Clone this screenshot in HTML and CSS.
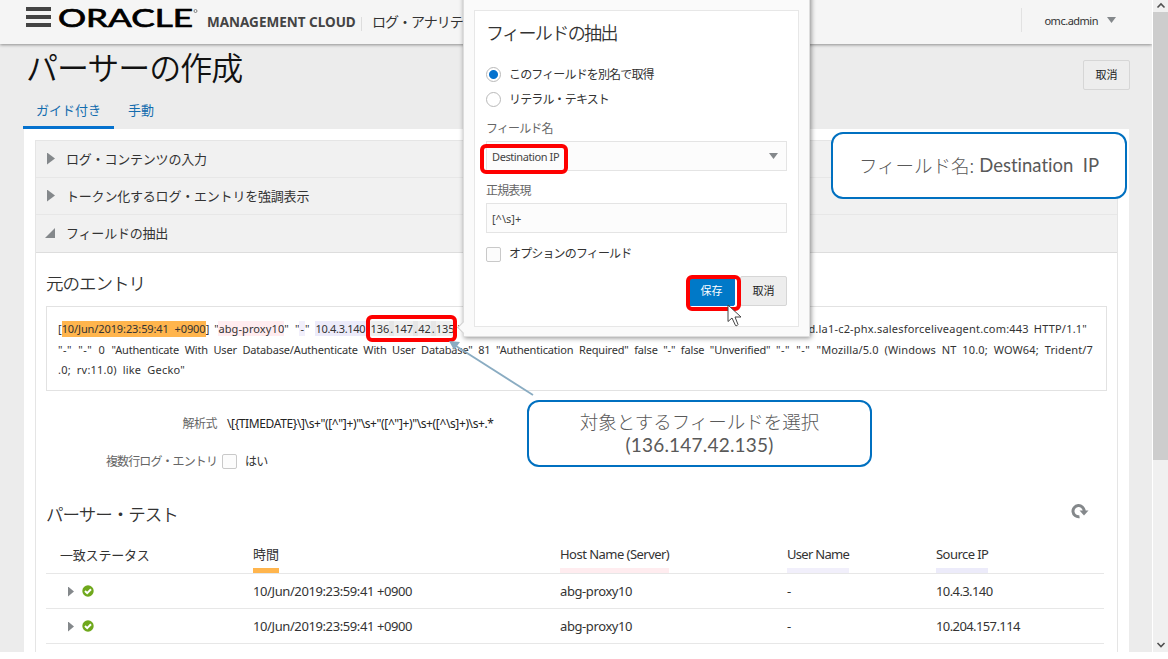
FILE: index.html
```
<!DOCTYPE html>
<html lang="ja">
<head>
    <meta charset="UTF-8">
    <meta name="viewport" content="width=device-width, initial-scale=1.0">
    <title>パーサーの作成</title>
    <link rel="stylesheet" href="styles.css">
</head>
<body>
    <div class="window">
        <div class="page">
            <header class="header">
                <div class="menu"><span></span><span></span><span></span></div>
                <svg class="logo" width="140" height="24" viewBox="0 0 140 24">
                    <text x="-1" y="18.500" textLength="135" lengthAdjust="spacingAndGlyphs">ORACLE</text>
                    <circle cx="136.500" cy="3" r="1.500" fill="none" stroke="#666" stroke-width="0.800"/>
                </svg>
                <span class="product">MANAGEMENT CLOUD</span>
                <span class="service">ログ・アナリティクス</span>
                <div class="user"><span>omc.admin</span><i class="caret"></i></div>
            </header>

            <div class="title-row">
                <h1>パーサーの作成</h1>
                <button class="btn">取消</button>
            </div>
            <nav class="tabs">
                <a class="tab active">ガイド付き</a>
                <a class="tab">手動</a>
            </nav>

            <main class="panel">
                <div class="accordion">
                    <div class="step"><i class="arrow"></i><span>ログ・コンテンツの入力</span></div>
                    <div class="step"><i class="arrow"></i><span>トークン化するログ・エントリを強調表示</span></div>
                    <div class="step open"><i class="arrow-open"></i><span>フィールドの抽出</span></div>

                    <section class="content">
                        <h2>元のエントリ</h2>
                        <div class="log">
                            <div class="log-line first">
                                <span>[</span><span class="hl-time">10/Jun/2019:23:59:41 +0900</span><span>]</span>
                                <span class="host">"<span class="hl-host">abg-proxy10</span>"</span>
                                <span class="dash">"<span class="hl-user">-</span>"</span>
                                <span class="hl-source">10.4.3.140</span>
                                <span class="hl-dest">136<b>.</b>147<b>.</b>42<b>.</b>135</span>
                                <span class="quote">"</span>
                                <span class="tail">d.la1-c2-phx.salesforceliveagent.com:443 HTTP/1.1"</span>
                            </div>
                            <div class="log-line second"><span class="wide">"-" "-" 0 </span>"Authenticate With User Database/Authenticate With User Database" 81 "Authentication Required" false "-" false "Unverified" <span class="wide">"-" "-" </span><span class="agent">"Mozilla/5.0 (Windows NT 10.0; WOW64; Trident/7</span></div>
                            <div class="log-line third">.0; rv:11.0) like Gecko"</div>
                        </div>

                        <div class="form-row expr">
                            <label>解析式</label>
                            <span class="expr-value">\[{TIMEDATE}\]\s+"([^"]+)"\s+"([^"]+)"\s+([^\s]+)\s+.*</span>
                        </div>
                        <div class="form-row multi">
                            <label>複数行ログ・エントリ</label>
                            <i class="checkbox"></i>
                            <span>はい</span>
                        </div>

                        <div class="test-head">
                            <h2>パーサー・テスト</h2>
                            <svg class="refresh" width="18" height="16" viewBox="0 0 18 16">
                                <path d="M8.500 13.700 A5.600 5.600 0 1 1 13.200 8" fill="none" stroke="#84888b" stroke-width="3"/>
                                <path d="M8.500 7.500 H17.500 L13 12.500 Z" fill="#84888b"/>
                            </svg>
                        </div>
                        <div class="table">
                            <div class="row head">
                                <span class="status-title">一致ステータス</span>
                                <span><em class="bar-time">時間</em></span>
                                <span><em class="bar-host">Host Name (Server)</em></span>
                                <span><em class="bar-user">User Name</em></span>
                                <span><em class="bar-source">Source IP</em></span>
                            </div>
                            <div class="row">
                                <span class="status"><i class="arrow small"></i><svg width="12" height="12" viewBox="0 0 12 12"><circle cx="6" cy="6" r="5.700" fill="#6fa81c"/><path d="M3 6 L5.200 8.200 L9 4.300" fill="none" stroke="#fff" stroke-width="2"/></svg></span>
                                <span>10/Jun/2019:23:59:41 +0900</span>
                                <span>abg-proxy10</span>
                                <span>-</span>
                                <span class="ip">10.4.3.140</span>
                            </div>
                            <div class="row">
                                <span class="status"><i class="arrow small"></i><svg width="12" height="12" viewBox="0 0 12 12"><circle cx="6" cy="6" r="5.700" fill="#6fa81c"/><path d="M3 6 L5.200 8.200 L9 4.300" fill="none" stroke="#fff" stroke-width="2"/></svg></span>
                                <span>10/Jun/2019:23:59:41 +0900</span>
                                <span>abg-proxy10</span>
                                <span>-</span>
                                <span class="ip">10.204.157.114</span>
                            </div>
                        </div>
                    </section>
                </div>
            </main>
        </div>

        <div class="scrollbar">
            <svg width="16" height="12" viewBox="0 0 16 12"><path d="M4.500 7.500 L8 4 L11.500 7.500" fill="none" stroke="#505050" stroke-width="1.600"/></svg>
            <div class="thumb"></div>
            <svg class="down" width="16" height="12" viewBox="0 0 16 12"><path d="M4.500 3 L8 6.500 L11.500 3" fill="none" stroke="#505050" stroke-width="1.600"/></svg>
        </div>

        <div class="popup">
            <i class="popup-tail"></i>
            <div class="popup-body">
                <h3>フィールドの抽出</h3>
                <div class="radio-row"><i class="radio on"></i><span>このフィールドを別名で取得</span></div>
                <div class="radio-row"><i class="radio"></i><span>リテラル・テキスト</span></div>
                <label class="name-label">フィールド名</label>
                <div class="input select"><span>Destination IP</span><i class="caret"></i></div>
                <label class="regex-label">正規表現</label>
                <div class="input">[^\s]+</div>
                <div class="option-row"><i class="checkbox"></i><span>オプションのフィールド</span></div>
                <div class="actions">
                    <button class="btn primary">保存</button>
                    <button class="btn">取消</button>
                </div>
            </div>
        </div>

        <!-- 注釈 -->
        <div class="mark mark-name"></div>
        <div class="mark mark-save"></div>
        <div class="mark mark-ip"></div>
        <svg class="pointer" width="92" height="60" viewBox="0 0 92 60">
            <path d="M84 55 L7 6" stroke="#8aacc2" stroke-width="1.800"/>
            <path d="M0 1 L11 2 L5 10 Z" fill="#8aacc2"/>
        </svg>
        <div class="callout callout-field"><span class="field-jp">フィールド名:</span><span class="field-name">Destination&nbsp; IP</span></div>
        <div class="callout callout-target"><span class="target-jp">対象とするフィールドを選択</span><span class="target-ip">(136.147.42.135)</span></div>
        <svg class="cursor" width="16" height="24" viewBox="0 0 16 24">
            <path d="M1 1 V17.500 L5 14 L8.500 21.500 Q10 22.500 11 20.500 L8 13 H14 Z" fill="#fff" stroke="#444" stroke-width="1"/>
        </svg>
    </div>
</body>
</html>
```
FILE: styles.css
```
* {
    box-sizing: border-box;
}

body {
    margin: 0;
    background: #fff;
    color: #333;
    font-family: "Noto Sans", "Noto Sans CJK JP", sans-serif;
    font-size: 13px;
}

h1, h2, h3 {
    margin: 0;
    font-family: "Noto Sans CJK JP", sans-serif;
    font-weight: 350;
    white-space: nowrap;
}

i, em {
    font-style: normal;
}

.window {
    position: relative;
    display: flex;
    width: 1168px;
    height: 652px;
    overflow: hidden;
}

.page {
    width: 1152px;
    background: #ececec;
}

.header {
    display: flex;
    align-items: flex-start;
    height: 44px;
    background: #f5f5f5;
    box-shadow: 0 1px 3px rgba(0, 0, 0, 0.4);
    white-space: nowrap;
}

.menu {
    display: flex;
    flex-direction: column;
    gap: 4px;
    width: 25px;
    margin: 7px 0 0 26px;
}

.menu span {
    height: 4px;
    background: #444;
}

.logo {
    margin: 8px 0 0 8px;
    overflow: visible;
}

.logo text {
    font-family: "Lato", sans-serif;
    font-size: 25px;
    font-weight: 400;
    stroke: #000;
    stroke-width: 0.7px;
}

.product {
    width: 155px;
    margin: 13px 0 0 8px;
    font-family: "Noto Sans", sans-serif;
    font-size: 13.5px;
    font-weight: 700;
    line-height: 18px;
    color: #444;
}

.service {
    height: 14px;
    margin: 17px 0 0 -1px;
    padding-left: 10px;
    border-left: 1px solid #ddd;
    font-size: 14px;
    line-height: 9px;
    letter-spacing: -1px;
}

.user {
    display: flex;
    align-items: center;
    gap: 9px;
    height: 24px;
    margin: 8px 36px 0 auto;
    padding-left: 22px;
    border-left: 1px solid #e2e2e2;
    font-size: 11px;
    letter-spacing: -0.5px;
}

.caret {
    width: 9px;
    height: 6px;
    background: #84888b;
    clip-path: polygon(0 0, 100% 0, 50% 100%);
}

.title-row {
    display: flex;
    justify-content: space-between;
    align-items: flex-start;
    height: 52px;
    padding: 0 22px 0 26px;
}

.title-row h1 {
    font-size: 32px;
    line-height: 44px;
    letter-spacing: -1px;
    color: #111;
}

.btn {
    width: 47px;
    height: 30px;
    padding: 0 0 2px;
    border: 1px solid #d6d6d6;
    border-radius: 2px;
    background: #ededed;
    color: #222;
    font-family: inherit;
    font-size: 11px;
}

.title-row .btn {
    margin-top: 16px;
}

.tabs {
    display: flex;
    height: 33px;
    padding-left: 23px;
    font-size: 13px;
    color: #146cae;
}

.tab {
    height: 33px;
    padding: 0 14px;
    line-height: 28px;
}

.tab.active {
    width: 91px;
    padding: 0 13px;
    border-bottom: 3px solid #0572ce;
}

.panel {
    width: 1105px;
    margin-left: 24px;
    padding: 11px 11px 0;
    background: #fff;
}

.accordion {
    height: 530px;
    border: 1px solid #e5e5e5;
}

.step {
    display: flex;
    align-items: center;
    height: 37px;
    padding: 0 0 2px 11px;
    background: #f1f1f1;
    border-bottom: 1px solid #e7e7e7;
    font-size: 13px;
    letter-spacing: -0.2px;
}

.step.open {
    height: 38px;
    padding: 0 0 2px 9px;
    border-color: #ddd;
}

.arrow {
    width: 8px;
    height: 12px;
    margin: 1px 11px 0 0;
    background: #84888b;
    clip-path: polygon(0 0, 100% 50%, 0 100%);
}

.arrow-open {
    width: 10px;
    height: 10px;
    margin: 1px 11px 0 0;
    background: #84888b;
    clip-path: polygon(100% 0, 100% 100%, 0 100%);
}

.content {
    padding: 0 11px 0 10px;
}

.content h2 {
    font-size: 17.5px;
    line-height: 28px;
    letter-spacing: -1px;
}

.content > h2 {
    margin-top: 16px;
}

.log {
    width: 1061px;
    height: 85px;
    margin-top: 9px;
    padding: 11px 11px;
    border: 1px solid #e2e2e2;
    font-size: 11px;
    white-space: nowrap;
}

.log-line {
    height: 21px;
    line-height: 21px;
}

.second {
    letter-spacing: -0.17px;
    word-spacing: 2.9px;
}

.wide {
    letter-spacing: 0.5px;
}

.agent {
    letter-spacing: 0.13px;
}

.third {
    line-height: 20px;
    letter-spacing: 0.2px;
    word-spacing: 3px;
}

.first {
    display: flex;
}

.log-line .hl-time {
    width: 144px;
    height: 16px;
    margin-top: 3px;
    background: #ffb54d;
    line-height: 16px;
    letter-spacing: -0.1px;
    word-spacing: 3px;
}

.host {
    margin-left: 5px;
    letter-spacing: 0.1px;
}

.dash {
    margin-left: 6px;
}

.hl-host {
    background: #ffecef;
}

.hl-user {
    padding: 0 1px;
    background: #f1effb;
}

.hl-source {
    width: 51px;
    height: 15px;
    margin: 3px 0 0 6px;
    background: #ecebfa;
    line-height: 15px;
    letter-spacing: -0.3px;
}

.hl-dest {
    width: 84px;
    height: 15px;
    margin: 3px 0 0 4px;
    background: #efefef;
    line-height: 15px;
}

.hl-dest b {
    padding: 0 1px;
    font-weight: 400;
    background: #e6e6e6;
}

.quote {
    margin-left: 3px;
}

.tail {
    margin: 0 8px 0 auto;
    letter-spacing: 0.2px;
    word-spacing: 2px;
}

.form-row {
    display: flex;
    align-items: center;
    height: 24px;
    font-size: 12px;
    color: #333;
}

.form-row label {
    width: 171px;
    text-align: right;
    color: #666;
    font-size: 12px;
    letter-spacing: -0.5px;
    white-space: nowrap;
}

.expr {
    margin-top: 20px;
}

.expr-value {
    margin-left: 10px;
    letter-spacing: -0.38px;
    white-space: nowrap;
    color: #222;
}

.multi {
    margin-top: 14px;
}

.multi label {
    letter-spacing: -0.9px;
}

.multi span {
    letter-spacing: -0.8px;
}

.checkbox {
    width: 15px;
    height: 15px;
    border: 1px solid #c9c9c9;
    border-radius: 2px;
    background: #fcfcfc;
}

.multi .checkbox {
    margin: 0 8px 0 5px;
}

.test-head {
    display: flex;
    justify-content: space-between;
    margin-top: 27px;
}

.test-head h2 {
    letter-spacing: -1px;
}

.refresh {
    margin: 3px 17px 0 0;
}

.table {
    width: 1058px;
    margin-top: 9px;
}

.row {
    display: grid;
    grid-template-columns: 207px 307px 227px 149px 1fr;
    align-items: center;
    height: 35px;
    border-bottom: 1px solid #e7e7e7;
    letter-spacing: -0.4px;
    white-space: nowrap;
}

.row.head {
    height: 37px;
    align-items: end;
}

.head em {
    display: inline-block;
    height: 32px;
    padding-top: 3px;
    line-height: 20px;
    border-bottom: 5px solid;
}

.head .bar-time {
    border-color: #ffb54d;
    letter-spacing: 0;
}

.head .bar-host {
    border-color: #ffecef;
    letter-spacing: -0.53px;
}

.head .bar-user {
    border-color: #f1effb;
    letter-spacing: -0.7px;
}

.head .bar-source {
    border-color: #ecebfa;
    letter-spacing: -0.55px;
}

.ip {
    letter-spacing: -0.6px;
}

.head span {
    height: 32px;
}

.head .status-title {
    padding: 4px 0 0 14px;
    letter-spacing: -0.2px;
}

.status {
    display: flex;
    align-items: center;
    padding-left: 22px;
}

.small {
    width: 6px;
    height: 10px;
    margin-right: 8px;
}

.scrollbar {
    display: flex;
    flex-direction: column;
    width: 16px;
    background: #f0f0f0;
    border-left: 1px solid #fff;
}

.thumb {
    width: 15px;
    height: 448px;
    background: #cdcdcd;
}

.down {
    margin-top: auto;
}

.popup {
    position: absolute;
    top: -8px;
    left: 463px;
    width: 347px;
    height: 345px;
    padding: 17px 10px 11px;
    background: #fafafa;
    border: 1px solid #ddd;
    box-shadow: 1px 1px 5px rgba(0, 0, 0, 0.45);
}

.popup-tail {
    position: absolute;
    left: -5px;
    bottom: 4px;
    width: 9px;
    height: 9px;
    background: #fafafa;
    border-left: 1px solid #ccc;
    border-bottom: 1px solid #ccc;
    transform: rotate(45deg);
}

.popup-body {
    width: 325px;
    height: 317px;
    padding: 7px 11px 0;
    background: #fff;
    border: 1px solid #e7e7e7;
    font-size: 12px;
    letter-spacing: -0.85px;
    white-space: nowrap;
}

.popup h3 {
    font-size: 18px;
    line-height: 28px;
    margin-bottom: 16px;
    letter-spacing: -1.6px;
}

.radio-row, .option-row {
    display: flex;
    align-items: center;
    gap: 8px;
    height: 25px;
}

.radio-row span, .option-row span {
    margin-top: -2px;
}

.radio {
    width: 15px;
    height: 15px;
    border: 1px solid #b9b9b9;
    border-radius: 50%;
}

.radio.on {
    background: radial-gradient(circle, #0572ce 4px, #fff 5px);
}

.popup label {
    display: block;
    height: 29px;
    line-height: 34px;
    color: #666;
}

.input {
    width: 301px;
    height: 30px;
    padding-left: 5px;
    border: 1px solid #e4e4e4;
    background: #fcfcfc;
    font-size: 11px;
    letter-spacing: 0;
    line-height: 29px;
    color: #444;
}

.popup .regex-label {
    height: 32px;
    line-height: 40px;
}

.select {
    display: flex;
    justify-content: space-between;
    align-items: center;
    padding-right: 8px;
    letter-spacing: -0.4px;
}

.option-row {
    margin-top: 9px;
}

.option-row span {
    margin-top: -3px;
}

.actions {
    display: flex;
    justify-content: flex-end;
    gap: 5px;
    width: 301px;
    margin-top: 9px;
}

.btn.primary {
    border-color: #0572ce;
    background: #0079c8;
    color: #fff;
}

.mark {
    position: absolute;
    border: 4px solid #fe0000;
    border-radius: 6px;
}

.mark-name {
    left: 480px;
    top: 144px;
    width: 88px;
    height: 30px;
}

.mark-save {
    left: 686px;
    top: 275px;
    width: 55px;
    height: 36px;
}

.mark-ip {
    left: 366px;
    top: 315px;
    width: 91px;
    height: 27px;
}

.pointer {
    position: absolute;
    left: 449px;
    top: 340px;
}

.callout {
    position: absolute;
    display: flex;
    justify-content: center;
    align-items: center;
    padding-bottom: 2px;
    border: 2px solid #0070c0;
    border-radius: 12px;
    background: #fff;
    color: #595959;
    font-family: "Noto Sans CJK JP", sans-serif;
    font-size: 18.5px;
    font-weight: 300;
    white-space: nowrap;
}

.callout-field {
    left: 831px;
    top: 132px;
    width: 296px;
    height: 67px;
}

.callout-target {
    left: 527px;
    top: 400px;
    width: 345px;
    height: 67px;
    flex-direction: column;
    line-height: 23px;
}

.field-jp {
    margin-right: 5px;
}

.field-name, .target-ip {
    font-family: "Lato", sans-serif;
    font-size: 18.5px;
    font-weight: 400;
    font-variant-ligatures: none;
}

.target-ip {
    font-size: 19px;
    letter-spacing: 0.2px;
}

.cursor {
    position: absolute;
    left: 727px;
    top: 304px;
}
```
